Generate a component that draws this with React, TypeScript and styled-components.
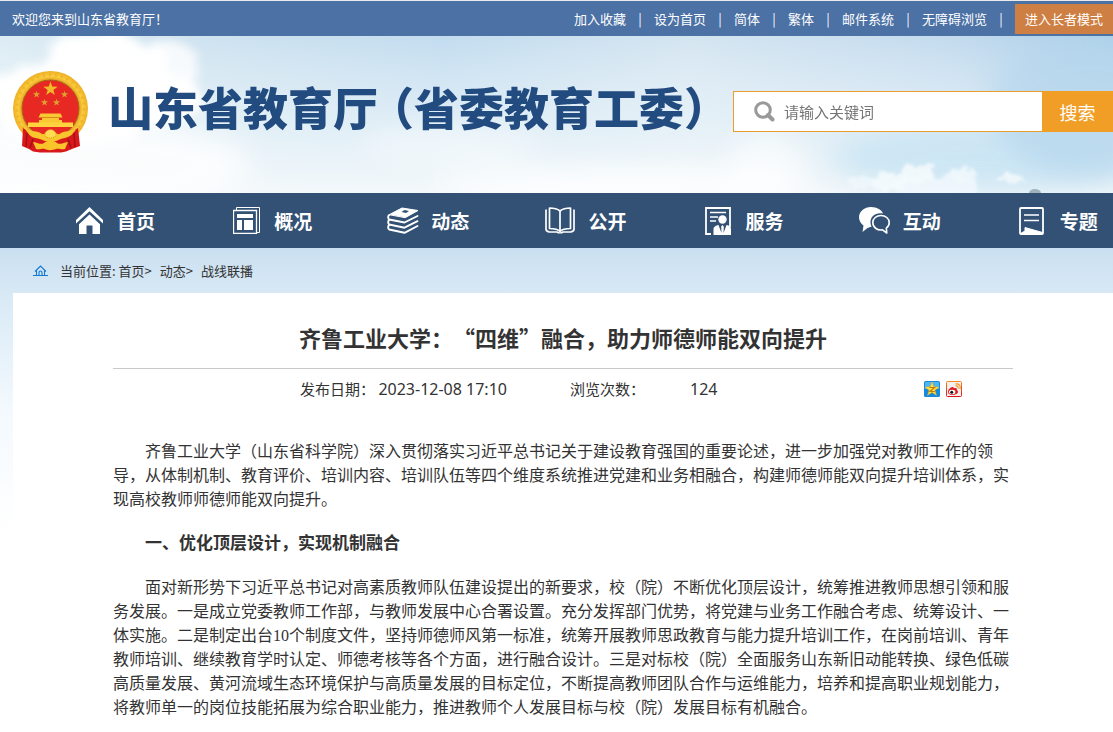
import React from 'react';
import styled, { createGlobalStyle } from 'styled-components';

const GlobalStyle = createGlobalStyle`
  * { box-sizing: border-box; }
  body {
    margin: 0;
    background: #fff;
    color: #333;
    font-family: 'Noto Sans CJK SC', 'Noto Sans', sans-serif;
    font-size: 13px;
    text-spacing-trim: space-all;
  }
  a { color: inherit; text-decoration: none; }
`;

const TopBar = styled.div`
  display: flex;
  align-items: center;
  height: 36px;
  padding-left: 12px;
  border-top: 1px solid #e9eaec;
  background: #4b71a5;
  color: #fff;
  line-height: 20px;
`;

const TopLinks = styled.nav`
  display: flex;
  align-items: center;
  margin-left: auto;
  white-space: nowrap;
`;

const Separator = styled.span`
  width: 28px;
  text-align: center;
`;

const ElderButton = styled.button`
  width: 98px;
  height: 30px;
  padding: 0;
  border: 0;
  background: #ce7f43;
  color: #fff;
  font: inherit;
`;

const Banner = styled.header`
  position: relative;
  height: 157px;
  overflow: hidden;
  background: #e4f0f7;
`;

const Sky = styled.svg`
  position: absolute;
  inset: 0;
  width: 100%;
  height: 100%;
`;

const BannerRow = styled.div`
  position: relative;
  display: flex;
  align-items: center;
  height: 100%;
  padding: 0 0 6px 13px;
`;

const Brand = styled.a`
  display: flex;
  align-items: center;
  gap: 19px;
`;

const BrandName = styled.h1`
  margin: 0;
  padding-bottom: 10px;
  color: #224b80;
  font-size: 45px;
  font-weight: 900;
  line-height: 60px;
  white-space: nowrap;
`;

const Paren = styled.span<{ $side: 'left' | 'right' }>`
  display: inline-block;
  width: 36px;
  text-align: ${(p) => p.$side};
  font-feature-settings: 'halt';
`;

const SearchForm = styled.form`
  display: flex;
  width: 380px;
  height: 41px;
  margin-left: auto;
`;

const SearchField = styled.label`
  display: flex;
  flex: 1;
  align-items: center;
  gap: 9px;
  padding-left: 20px;
  border: 1px solid #eb9d2c;
  border-right: 0;
  background: #fff;
`;

const SearchInput = styled.input`
  flex: 1;
  min-width: 0;
  padding: 0;
  border: 0;
  outline: 0;
  background: transparent;
  font-family: inherit;
  font-size: 15px;
  line-height: 24px;
  &::placeholder { color: #757575; }
`;

const SearchButton = styled.button`
  width: 71px;
  padding: 0;
  border: 0;
  background: #f09e26;
  color: #fff;
  font-family: inherit;
  font-size: 18px;
`;

const MainNav = styled.nav`
  display: grid;
  grid-template-columns: repeat(7, 1fr);
  height: 55px;
  padding-left: 13px;
  background: #325175;
`;

const NavItem = styled.a`
  display: flex;
  align-items: center;
  gap: 12px;
  padding-left: 60px;
  color: #fff;
  font-size: 19px;
  font-weight: 700;
  white-space: nowrap;
`;

const NavIcon = styled.span`
  display: flex;
  flex: none;
  justify-content: center;
  width: 32px;
`;

const Page = styled.main`
  padding-left: 13px;
  background: linear-gradient(#cadff1 0, #d8e9f5 45px, #f3f9fe 160px, #fff 285px);
`;

const Breadcrumb = styled.nav`
  display: flex;
  align-items: center;
  gap: 8px;
  height: 45px;
  padding-left: 20px;
  line-height: 20px;
`;

const CrumbLabel = styled.span`
  display: flex;
  align-items: center;
  gap: 12px;
`;

const Panel = styled.div`
  padding: 28px 24px 12px;
  background: #fff;
`;

const Article = styled.article`
  max-width: 900px;
  margin: 0 auto;
`;

const ArticleTitle = styled.h2`
  margin: 0;
  padding-bottom: 15px;
  border-bottom: 1px solid #c9c9c9;
  font-size: 22px;
  font-weight: 700;
  line-height: 32px;
  text-align: center;
`;

const Meta = styled.div`
  display: grid;
  grid-template-columns: 270px 120px 1fr auto;
  align-items: center;
  height: 40px;
  padding: 0 51px 0 187px;
  font-size: 15px;
  line-height: 24px;
`;

const Value = styled.span`
  font-family: 'Noto Sans', 'Noto Sans CJK SC', sans-serif;
  font-size: 16px;
`;

const Share = styled.div`
  display: flex;
  gap: 6px;
  a { display: flex; }
`;

const Body = styled.div`
  padding-top: 11px;
  font-family: 'Liberation Serif', 'Noto Sans CJK SC', sans-serif;
  font-size: 16px;
  line-height: 24px;
`;

const Paragraph = styled.p`
  margin: 20px 0;
  text-indent: 32px;
`;

const SectionTitle = styled.h3`
  margin: 20px 0;
  font-size: 17px;
  font-weight: 700;
  line-height: 24px;
  text-indent: 32px;
`;

const starPath = (cx: number, cy: number, r: number) => {
  let d = '';
  for (let i = 0; i < 10; i += 1) {
    const rad = i % 2 ? r * 0.4 : r;
    const a = -Math.PI / 2 + (i * Math.PI) / 5;
    d += `${i ? 'L' : 'M'}${(cx + rad * Math.cos(a)).toFixed(2)} ${(cy + rad * Math.sin(a)).toFixed(2)}`;
  }
  return `${d}Z`;
};

const SkyBackdrop = () => (
  <Sky viewBox="0 0 1113 157" preserveAspectRatio="none" aria-hidden="true">
    <defs>
      <linearGradient id="skyBase" x1="0" x2="1" y1="0" y2="0">
        <stop offset="0" stopColor="#dcecf4" />
        <stop offset=".16" stopColor="#cfe3f0" />
        <stop offset=".4" stopColor="#c2dcef" />
        <stop offset=".62" stopColor="#d4e5f1" />
        <stop offset=".85" stopColor="#c3dbee" />
        <stop offset="1" stopColor="#abcfe9" />
      </linearGradient>
      <linearGradient id="skyFade" x1="0" x2="0" y1="0" y2="1">
        <stop offset="0" stopColor="#fff" stopOpacity="0" />
        <stop offset=".55" stopColor="#f0f8fb" stopOpacity=".6" />
        <stop offset="1" stopColor="#f8fbfc" stopOpacity=".9" />
      </linearGradient>
      <filter id="soft" x="-40%" y="-80%" width="180%" height="260%"><feGaussianBlur stdDeviation="14" /></filter>
      <filter id="cloud" x="-20%" y="-40%" width="140%" height="180%">
        <feTurbulence type="fractalNoise" baseFrequency=".025" numOctaves="4" seed="7" />
        <feDisplacementMap in="SourceGraphic" scale="40" xChannelSelector="R" yChannelSelector="G" />
        <feGaussianBlur stdDeviation="5" />
      </filter>
      <filter id="wisp" x="-10%" y="-40%" width="120%" height="180%">
        <feTurbulence type="fractalNoise" baseFrequency=".09" numOctaves="3" seed="4" />
        <feDisplacementMap in="SourceGraphic" scale="14" xChannelSelector="R" yChannelSelector="G" />
        <feGaussianBlur stdDeviation="1.5" />
      </filter>
    </defs>
    <rect width="1113" height="157" fill="url(#skyBase)" />
    <rect width="1113" height="157" fill="url(#skyFade)" />
    <ellipse cx="60" cy="130" rx="190" ry="50" fill="#fff" opacity=".8" filter="url(#soft)" />
    <g fill="#fff" filter="url(#cloud)">
      <ellipse cx="90" cy="62" rx="110" ry="42" />
      <ellipse cx="105" cy="20" rx="54" ry="26" />
      <ellipse cx="165" cy="34" rx="32" ry="26" opacity=".8" />
    </g>
    <g fill="#fff" filter="url(#soft)">
      <ellipse cx="450" cy="110" rx="90" ry="18" opacity=".5" />
      <ellipse cx="620" cy="152" rx="190" ry="20" opacity=".8" />
      <ellipse cx="765" cy="130" rx="36" ry="36" opacity=".6" />
    </g>
    <ellipse cx="980" cy="122" rx="150" ry="34" fill="#c6e3f3" opacity=".8" filter="url(#soft)" />
    <ellipse cx="1090" cy="70" rx="100" ry="70" fill="#b4d5ec" opacity=".7" filter="url(#soft)" />
    <g fill="#f4fafd" filter="url(#wisp)">
      <ellipse cx="862" cy="146" rx="16" ry="6" opacity=".6" />
      <ellipse cx="890" cy="146" rx="18" ry="10" opacity=".85" />
      <ellipse cx="918" cy="138" rx="17" ry="9" opacity=".9" />
      <ellipse cx="935" cy="150" rx="46" ry="10" opacity=".75" />
      <ellipse cx="962" cy="138" rx="13" ry="6" opacity=".8" />
      <ellipse cx="1012" cy="143" rx="14" ry="4" opacity=".8" />
    </g>
    <ellipse cx="1035" cy="157" rx="6" ry="4" fill="#9fb3bd" />
  </Sky>
);

const Emblem = () => (
  <svg width="76" height="82" viewBox="0 0 76 82" role="img" aria-label="国徽">
    <defs>
      <radialGradient id="gold" cx=".5" cy=".5" r=".5">
        <stop offset=".74" stopColor="#dd9a1c" />
        <stop offset=".86" stopColor="#fbcc3c" />
        <stop offset="1" stopColor="#eeae24" />
      </radialGradient>
    </defs>
    <circle cx="37.500" cy="37.500" r="37.500" fill="url(#gold)" />
    <circle cx="37.500" cy="37.500" r="33.500" fill="none" stroke="#dc9c1c" strokeWidth="2.500" strokeDasharray="2 4" opacity=".4" />
    <circle cx="37.500" cy="37.500" r="28.500" fill="#e82822" stroke="#a9661a" />
    <path d={starPath(37.5, 18, 7.5)} fill="#f2b929" />
    <path d={[starPath(23.5, 23.5, 3.8), starPath(51.5, 23.5, 3.8), starPath(31.5, 31.5, 3.8), starPath(43.500, 31.5, 3.8)].join('')} fill="#dfa032" />
    <path d="M27.500 42.500h20l2 4h-24ZM29 46.500h17v3.500H29ZM26 49h23v3H26Z" fill="#f9c832" />
    <path d="M15 51.500h45v4.500H15Z" fill="#ffd43c" />
    <path d="M28 46.500h19" stroke="#d58d17" />
    <path d="M10 57c4 3 9 5 14 9l26 0c6-4 10-6 15-9l2 18-8 3-6 2.500-5 1H27l-7-1L16 78l-7-3Z" fill="#d8191c" />
    <path d="M14 62l-1 14M20 68l-3 9M61 62l1 14M55 68l3 9" stroke="#a80e14" strokeWidth="1.500" />
    <path d="M12 58c6 3 12 1 17 5 3 1 5-4 8.500-4s6 5 9 4c5-4 11-2 17-5l-5 6c-6 4-10 3-13 5-4 2-12 2-16 0-3-2-9-1-13-5Z" fill="#f9c62d" />
    <path d="M32 64a5.500 5.500 0 0 1 11 0c-1 4-10 4-11 0Z" fill="#ffdc52" stroke="#dc9518" strokeDasharray="1 1" />
    <path d="M20 71c6 1 8 3 11 1 3-3 10-3 13 0 3 2 5 0 11-1l-3 7c-4 1-6-1-9 0s-8 2-11 0c-3-1-5 1-9 0Z" fill="#f8c42a" />
  </svg>
);

const HomeIcon = () => (
  <svg width="27" height="27" viewBox="0 0 27 27" fill="#fff">
    <path d="M0 13 13.500 0 27 13v3.500L13.500 4.200 0 16.500Z" />
    <path d="M3 17.300 13.500 7.500 24 17.300V27h-7.500v-8.500h-6V27H3Z" />
  </svg>
);

const OverviewIcon = () => (
  <svg width="27" height="27" viewBox="0 0 27 27" fill="none" stroke="#fff">
    <path d="M3.500 3V.5h23v25H24" />
    <path d="M.5 3.500h23v23H.5Z" strokeWidth="1.300" />
    <path d="M4 7h16v4H4ZM4 13h5v10H4ZM11 13h9v10h-9Z" fill="#fff" stroke="none" />
  </svg>
);

const NewsIcon = () => (
  <svg width="32" height="27" viewBox="0 0 32 27" fill="none" stroke="#fff" strokeWidth="1.900" strokeLinejoin="round" strokeLinecap="round">
    <path d="M2.500 7.500 15 1l16 2.500L18.500 10.500Z" fill="#fff" strokeWidth="1" />
    <path d="m14.500 5 3-2 4.500 1-3 2Z" fill="#325175" stroke="none" />
    <path d="M2.200 8C.8 9 .8 11.500 2.200 12.500L17.500 15.500l13-6.500" />
    <path d="M2.200 13C.8 14.200.8 16.500 2.200 17.500l15.300 3.200 13-6.500" />
    <path d="M2.200 18C.8 19.200.8 21.500 2.200 22.500l15.300 3.300 13-6.800" />
  </svg>
);

const OpenBookIcon = () => (
  <svg width="30" height="27" viewBox="0 0 30 27" fill="none" stroke="#fff" strokeWidth="1.700" strokeLinejoin="round">
    <path d="M15 4C12 1.500 8 1 4.500 1v20.500c4 0 8 .5 10.500 3 2.500-2.500 6.500-3 10.500-3V1C22 1 18 1.500 15 4Zm0 0v20" />
    <path d="M1 2.500V22c0 1.500 1 2.500 3 2.800l8 .2c1.500 1 4.500 1 6 0l8-.2c2-.3 3-1.300 3-2.800V2.500" />
  </svg>
);

const ServiceIcon = () => (
  <svg width="26" height="28" viewBox="0 0 26 28" fill="none" stroke="#fff" strokeWidth="1.800">
    <path d="M6 27H1V1h24v19" />
    <path d="M5 5.500h16M5 10h8M5 14h6" strokeWidth="1.500" />
    <circle cx="17.500" cy="12.500" r="4.200" fill="#fff" stroke="none" />
    <path d="M8.500 28v-6c0-2 2-3.500 5-4l3 8-.3-6.500 1.300-1.500 1.300 1.500-.3 6.500 3-8c3 .5 4.500 2 4.500 4v6Z" fill="#fff" stroke="none" />
  </svg>
);

const ChatIcon = () => (
  <svg width="31" height="27" viewBox="0 0 31 27">
    <path d="M12 0c6 0 11 3 12 6.500-7-1.500-12.500 2.500-12.500 8.500 0 2 .5 3.500 1.200 4.500L8.500 21l-5 4 1-6.500C2 17 0 13.500 0 10.500 0 4.500 5.500 0 12 0Z" fill="#fff" />
    <path d="M22 8.500c4.500 0 8.200 3 8.200 7 0 2.500-1.200 4.500-2.900 5.700l.5 4.800-4.300-3.200c-5.500.8-9.700-2.500-9.700-7.300 0-4 3.700-7 8.200-7Z" fill="none" stroke="#fff" strokeWidth="1.600" strokeLinejoin="round" />
  </svg>
);

const TopicIcon = () => (
  <svg width="25" height="28" viewBox="0 0 25 28" fill="none" stroke="#fff" strokeWidth="1.800" strokeLinejoin="round">
    <rect x="1" y="1" width="23" height="26" rx="1" />
    <path d="M5 8h15M5 13.500h15" strokeWidth="1.600" />
    <path d="M1.500 26.500h22v-1L6 20.500v3.500Z" fill="#fff" strokeWidth="1" />
  </svg>
);

const SearchIcon = () => (
  <svg width="21" height="21" viewBox="0 0 21 21" fill="none" stroke="#999">
    <circle cx="9" cy="9" r="7.300" strokeWidth="3" />
    <path d="m14 14 4.500 4.500" strokeWidth="4" strokeLinecap="round" />
  </svg>
);

const CrumbHomeIcon = () => (
  <svg width="15" height="11" viewBox="0 0 15 11" fill="none" stroke="#1479d0">
    <path d="M2 6.500 7.500 1 13 6.500M0 10.500h15M3.500 5.500v5M11.500 5.500v5M6 10V7.500q0-1.500 1.500-1.500T9 7.500V10" strokeWidth="1.100" />
  </svg>
);

const QzoneIcon = () => (
  <svg width="16" height="16" viewBox="0 0 16 16">
    <rect width="16" height="16" rx="1.500" fill="#1489e0" />
    <rect x="1" y="1" width="14" height="7" fill="#4db5f4" />
    <path d={starPath(8, 8.3, 7.4)} fill="#ffe33d" stroke="#f3b416" strokeWidth=".6" />
    <path d="M5.500 6.500h5L6 10.500h4.800" fill="none" stroke="#c97806" strokeWidth="1.200" />
  </svg>
);

const WeiboIcon = () => (
  <svg width="16" height="16" viewBox="0 0 16 16">
    <defs>
      <linearGradient id="weiboEdge" x1="0" x2="0" y1="0" y2="1">
        <stop offset="0" stopColor="#f58a1c" />
        <stop offset="1" stopColor="#d9151b" />
      </linearGradient>
    </defs>
    <rect x=".5" y=".5" width="15" height="15" rx="1" fill="#f4eeee" stroke="url(#weiboEdge)" />
    <path d="M2 11c0-3 3.500-5.500 5-5 1 .3.500 1.500.5 1.500s3-1 3.300.2c.2.600-.2 1.200.3 1.600 2 1 1 4.700-4.600 4.700C4 14 2 13 2 11Z" fill="#dd1b22" />
    <ellipse cx="6.200" cy="11" rx="3.200" ry="2.200" fill="#fff" />
    <circle cx="5.700" cy="11.200" r="1.500" fill="#111" />
    <path d="M9.500 5c2-.5 3.200 1 2.700 2.700M9.500 3c3.500-.6 5.500 2 4.500 5" fill="none" stroke="#f3931f" strokeWidth="1.100" />
  </svg>
);

const topLinks = ['加入收藏', '设为首页', '简体', '繁体', '邮件系统', '无障碍浏览'];

const navItems = [
  { label: '首页', Icon: HomeIcon },
  { label: '概况', Icon: OverviewIcon },
  { label: '动态', Icon: NewsIcon },
  { label: '公开', Icon: OpenBookIcon },
  { label: '服务', Icon: ServiceIcon },
  { label: '互动', Icon: ChatIcon },
  { label: '专题', Icon: TopicIcon },
];

export default function App() {
  return (
    <div lang="zh-CN">
      <GlobalStyle />
      <TopBar>
        <span>欢迎您来到山东省教育厅！</span>
        <TopLinks>
          {topLinks.map((label) => (
            <React.Fragment key={label}>
              <a href="#">{label}</a>
              <Separator>|</Separator>
            </React.Fragment>
          ))}
          <ElderButton type="button">进入长者模式</ElderButton>
        </TopLinks>
      </TopBar>

      <Banner>
        <SkyBackdrop />
        <BannerRow>
          <Brand href="#">
            <Emblem />
            <BrandName>
              山东省教育厅<Paren $side="right">（</Paren>省委教育工委<Paren $side="left">）</Paren>
            </BrandName>
          </Brand>
          <SearchForm onSubmit={(e) => e.preventDefault()}>
            <SearchField>
              <SearchIcon />
              <SearchInput type="text" placeholder="请输入关键词" aria-label="请输入关键词" />
            </SearchField>
            <SearchButton type="submit">搜索</SearchButton>
          </SearchForm>
        </BannerRow>
      </Banner>

      <MainNav>
        {navItems.map(({ label, Icon }) => (
          <NavItem key={label} href="#">
            <NavIcon><Icon /></NavIcon>
            {label}
          </NavItem>
        ))}
      </MainNav>

      <Page>
        <Breadcrumb>
          <CrumbLabel>
            <CrumbHomeIcon />
            <span>当前位置: <a href="#">首页</a>&gt;</span>
          </CrumbLabel>
          <span><a href="#">动态</a>&gt;</span>
          <a href="#">战线联播</a>
        </Breadcrumb>
        <Panel>
          <Article>
            <ArticleTitle>齐鲁工业大学：“四维”融合，助力师德师能双向提升</ArticleTitle>
            <Meta>
              <span>发布日期： <Value>2023-12-08 17:10</Value></span>
              <span>浏览次数：</span>
              <Value>124</Value>
              <Share>
                <a href="#" aria-label="QQ空间"><QzoneIcon /></a>
                <a href="#" aria-label="新浪微博"><WeiboIcon /></a>
              </Share>
            </Meta>
            <Body>
              <Paragraph>
                齐鲁工业大学（山东省科学院）深入贯彻落实习近平总书记关于建设教育强国的重要论述，进一步加强党对教师工作的领导，从体制机制、教育评价、培训内容、培训队伍等四个维度系统推进党建和业务相融合，构建师德师能双向提升培训体系，实现高校教师师德师能双向提升。
              </Paragraph>
              <SectionTitle>一、优化顶层设计，实现机制融合</SectionTitle>
              <Paragraph>
                面对新形势下习近平总书记对高素质教师队伍建设提出的新要求，校（院）不断优化顶层设计，统筹推进教师思想引领和服务发展。一是成立党委教师工作部，与教师发展中心合署设置。充分发挥部门优势，将党建与业务工作融合考虑、统筹设计、一体实施。二是制定出台10个制度文件，坚持师德师风第一标准，统筹开展教师思政教育与能力提升培训工作，在岗前培训、青年教师培训、继续教育学时认定、师德考核等各个方面，进行融合设计。三是对标校（院）全面服务山东新旧动能转换、绿色低碳高质量发展、黄河流域生态环境保护与高质量发展的目标定位，不断提高教师团队合作与运维能力，培养和提高职业规划能力，将教师单一的岗位技能拓展为综合职业能力，推进教师个人发展目标与校（院）发展目标有机融合。
              </Paragraph>
            </Body>
          </Article>
        </Panel>
      </Page>
    </div>
  );
}
